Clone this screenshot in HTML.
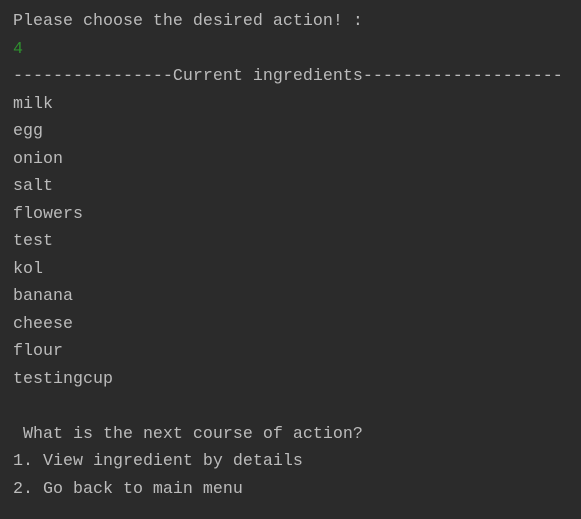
<!DOCTYPE html>
<html><head><style>
html,body{margin:0;padding:0;}
body{width:581px;height:519px;background:#2b2b2b;overflow:hidden;}
pre{margin:0;padding:8px 0 0 13px;font-family:"Liberation Mono",monospace;font-size:16.67px;line-height:27.5px;color:#bbbbbb;}
.g{color:#2f8f2f;}
</style></head><body>
<pre>Please choose the desired action! :
<span class="g">4</span>
----------------Current ingredients--------------------
milk
egg
onion
salt
flowers
test
kol
banana
cheese
flour
testingcup

 What is the next course of action?
1. View ingredient by details
2. Go back to main menu</pre>
</body></html>
